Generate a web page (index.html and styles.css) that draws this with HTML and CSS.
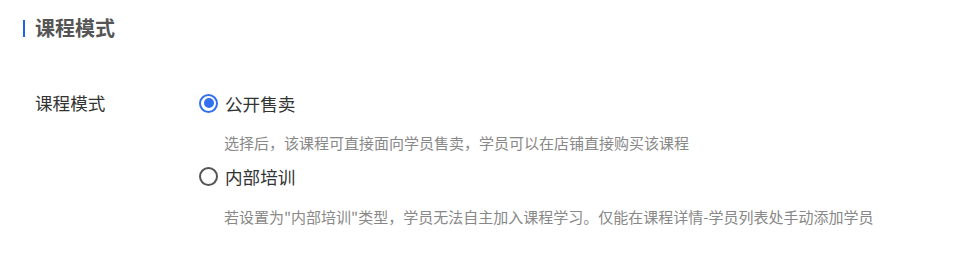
FILE: index.html
```html
<!DOCTYPE html>
<html>
<head>
    <meta charset="utf-8">
    <link rel="stylesheet" href="styles.css">
</head>
<body>
    <div class="panel">
        <div class="section-title">
            <span class="bar"></span>
            <h2>课程模式</h2>
        </div>

        <div class="form-row">
            <div class="form-label">课程模式</div>
            <div class="form-body">
                <label class="radio checked">
                    <span class="radio-dot"></span>
                    <span class="radio-text">公开售卖</span>
                </label>
                <p class="tip">选择后，该课程可直接面向学员售卖，学员可以在店铺直接购买该课程</p>

                <label class="radio">
                    <span class="radio-dot"></span>
                    <span class="radio-text">内部培训</span>
                </label>
                <p class="tip">若设置为"内部培训"类型，学员无法自主加入课程学习。仅能在课程详情-学员列表处手动添加学员</p>
            </div>
        </div>
    </div>
</body>
</html>
```

FILE: styles.css
```css
body {
    margin: 0;
    background: #fff;
    font-family: "Noto Sans CJK SC", "Noto Sans", sans-serif;
    color: #333;
}
.panel {
    padding: 14px 0 0 23px;
}
.section-title {
    display: flex;
    align-items: center;
    height: 28px;
}
.section-title .bar {
    width: 2px;
    height: 17px;
    background: #2060f0;
    margin-right: 10px;
}
.section-title h2 {
    margin: 0;
    font-size: 20px;
    font-weight: 700;
    color: #555;
    line-height: 28px;
}

.form-row {
    display: flex;
    margin-top: 48px;
    padding-left: 12px;
}
.form-label {
    width: 164px;
    font-size: 17.6px;
    line-height: 26px;
    color: #333;
}
.form-body {
    display: flex;
    flex-direction: column;
}
.radio {
    display: flex;
    align-items: center;
    height: 26px;
    cursor: pointer;
}
.radio-dot {
    box-sizing: border-box;
    width: 19px;
    height: 19px;
    border: 2px solid #555;
    border-radius: 50%;
    margin-right: 7px;
    position: relative;
}
.radio.checked .radio-dot {
    border-color: #3370f0;
}
.radio.checked .radio-dot::after {
    content: "";
    position: absolute;
    left: 2.5px;
    top: 2.5px;
    width: 10px;
    height: 10px;
    border-radius: 50%;
    background: #3370f0;
}
.radio-text {
    font-size: 17.6px;
    color: #333;
}
.tip {
    margin: 17px 0 10px 25px;
    font-size: 15px;
    line-height: 20px;
    color: #888;
}
.tip:last-child {
    margin-top: 18px;
}
```
